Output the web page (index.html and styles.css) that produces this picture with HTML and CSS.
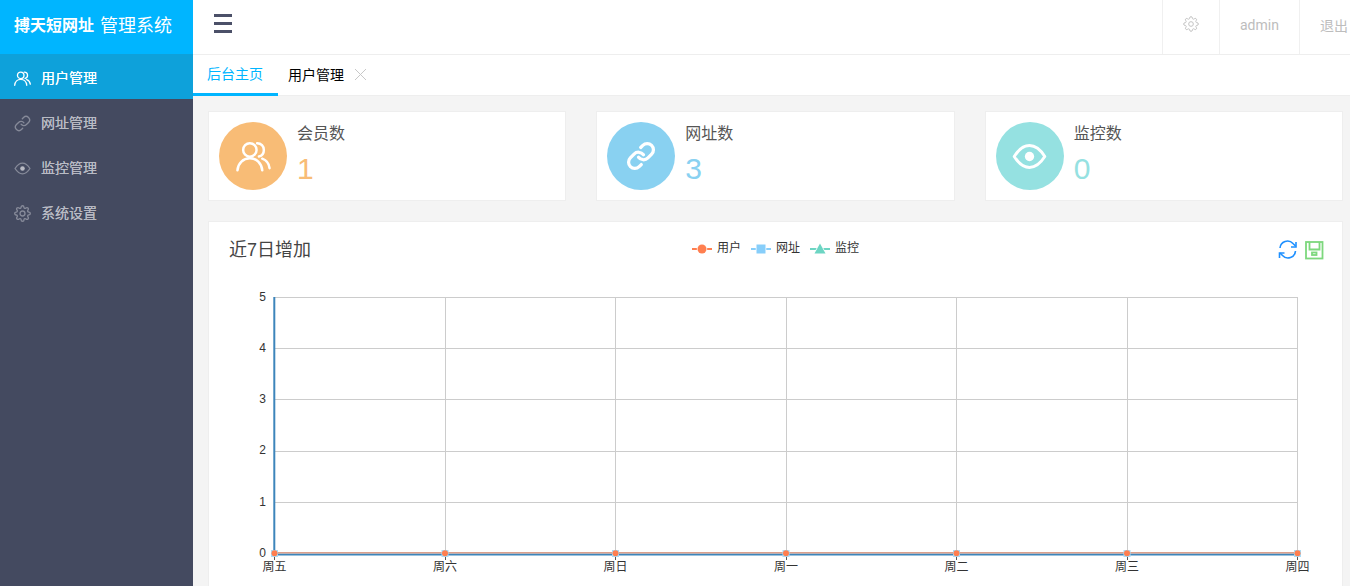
FILE: index.html
```html
<!DOCTYPE html>
<html lang="zh-CN">
<head>
  <meta charset="UTF-8">
  <meta name="viewport" content="width=device-width, initial-scale=1.0">
  <title>搏天短网址 管理系统</title>
  <link rel="stylesheet" href="styles.css">
</head>
<body>
  <svg class="icon-defs" width="0" height="0">
    <symbol id="i-users" viewBox="0 0 24 24">
      <circle cx="9.5" cy="7.5" r="4.6"/>
      <path d="M1 21.5c.4-5 4-8.300 8.500-8.300s8.100 3.300 8.500 8.300"/>
      <path d="M14.500 2.900c2.700 0 4.600 2.100 4.600 4.600 0 2.200-1.400 4-3.400 4.500"/>
      <path d="M18 13.500c2.800 1 4.700 3.700 5 6.500"/>
    </symbol>
    <symbol id="i-link" viewBox="0 0 24 24">
      <path d="M10 13a5 5 0 0 0 7.540.54l3-3a5 5 0 0 0-7.070-7.070l-1.720 1.710"/>
      <path d="M14 11a5 5 0 0 0-7.540-.54l-3 3a5 5 0 0 0 7.070 7.070l1.710-1.710"/>
    </symbol>
    <symbol id="i-eye" viewBox="0 0 24 24">
      <path d="M1.500 12C5 6.500 8.500 4.500 12 4.500s7 2 10.500 7.500C19 17.500 15.500 19.500 12 19.500S5 17.500 1.500 12z"/>
      <circle class="pupil" cx="12" cy="12" r="3.200"/>
    </symbol>
    <symbol id="i-gear" viewBox="0 0 24 24">
      <circle cx="12" cy="12" r="3.500"/>
      <path d="M19.400 15a1.650 1.650 0 0 0 .33 1.820l.06.06a2 2 0 0 1 0 2.830 2 2 0 0 1-2.830 0l-.06-.06a1.650 1.650 0 0 0-1.820-.33 1.650 1.650 0 0 0-1 1.510V21a2 2 0 0 1-2 2 2 2 0 0 1-2-2v-.09A1.650 1.650 0 0 0 9 19.400a1.650 1.650 0 0 0-1.820.33l-.06.06a2 2 0 0 1-2.830 0 2 2 0 0 1 0-2.830l.06-.06a1.650 1.650 0 0 0 .33-1.820 1.650 1.650 0 0 0-1.510-1H3a2 2 0 0 1-2-2 2 2 0 0 1 2-2h.09A1.650 1.650 0 0 0 4.600 9a1.650 1.650 0 0 0-.33-1.820l-.06-.06a2 2 0 0 1 0-2.830 2 2 0 0 1 2.830 0l.06.06a1.650 1.650 0 0 0 1.820.33H9a1.650 1.650 0 0 0 1-1.510V3a2 2 0 0 1 2-2 2 2 0 0 1 2 2v.09a1.650 1.650 0 0 0 1 1.510 1.650 1.650 0 0 0 1.820-.33l.06-.06a2 2 0 0 1 2.830 0 2 2 0 0 1 0 2.830l-.06.06a1.650 1.650 0 0 0-.33 1.820V9a1.650 1.650 0 0 0 1.510 1H21a2 2 0 0 1 2 2 2 2 0 0 1-2 2h-.09a1.650 1.650 0 0 0-1.510 1z"/>
    </symbol>
  </svg>

  <aside class="sidebar">
    <div class="logo"><b>搏天短网址</b><span>管理系统</span></div>
    <div class="menu-item active"><svg class="menu-icon"><use href="#i-users"/></svg>用户管理</div>
    <div class="menu-item"><svg class="menu-icon"><use href="#i-link"/></svg>网址管理</div>
    <div class="menu-item"><svg class="menu-icon"><use href="#i-eye"/></svg>监控管理</div>
    <div class="menu-item"><svg class="menu-icon"><use href="#i-gear"/></svg>系统设置</div>
  </aside>

  <div class="main">
    <header class="topbar">
      <div class="hamburger"><i></i><i></i><i></i></div>
      <div class="topbar-right">
        <div class="top-cell"><svg class="top-gear"><use href="#i-gear"/></svg></div>
        <div class="top-cell">admin</div>
        <div class="top-cell">退出</div>
      </div>
    </header>

    <nav class="tabs">
      <div class="tab current">后台主页</div>
      <div class="tab">用户管理<span class="tab-close"></span></div>
    </nav>

    <div class="content">
      <div class="stats">
        <div class="stat-card orange">
          <div class="stat-circle"><svg class="stat-icon"><use href="#i-users"/></svg></div>
          <div class="stat-text"><div class="stat-label">会员数</div><div class="stat-num">1</div></div>
        </div>
        <div class="stat-card blue">
          <div class="stat-circle"><svg class="stat-icon"><use href="#i-link"/></svg></div>
          <div class="stat-text"><div class="stat-label">网址数</div><div class="stat-num">3</div></div>
        </div>
        <div class="stat-card teal">
          <div class="stat-circle"><svg class="stat-icon"><use href="#i-eye"/></svg></div>
          <div class="stat-text"><div class="stat-label">监控数</div><div class="stat-num">0</div></div>
        </div>
      </div>

      <div class="chart-card">
        <svg class="chart" viewBox="209 222 1133 400" width="1133" height="400">
          <text class="chart-title" x="229" y="256">近7日增加</text>

          <path class="legend-orange" d="M692 249h20"/>
          <circle class="legend-mark" cx="702" cy="249" r="4.500" fill="#ff7f50"/>
          <text class="legend-text" x="717" y="252">用户</text>
          <path class="legend-sky" d="M751 249h20"/>
          <rect class="legend-mark" x="756.500" y="244.500" width="9" height="9" fill="#87cefa"/>
          <text class="legend-text" x="776" y="252">网址</text>
          <path class="legend-teal" d="M810 249h20"/>
          <path class="legend-mark" d="M820 243.500l5.500 10h-11z" fill="#6dd5c3"/>
          <text class="legend-text" x="835" y="252">监控</text>

          <g class="tool-refresh">
            <path d="M1280 248a7.500 7.500 0 0 1 13-4.500l2.500 2.500"/>
            <path d="M1296 242v5h-5"/>
            <path d="M1295.500 251a7.500 7.500 0 0 1-13 4.500l-2.500-2.500"/>
            <path d="M1279.500 258v-5h5"/>
          </g>
          <g class="tool-save">
            <rect x="1306" y="242" width="16.500" height="16.500"/>
            <path d="M1309.500 242v7.500h10v-7.500"/>
            <rect x="1312" y="252.500" width="4.500" height="2.500"/>
          </g>

          <path class="grid" d="M274 297.500h1024M274 348.500h1024M274 399.500h1024M274 451.500h1024M274 502.500h1024M445.500 297v256M615.500 297v256M786.500 297v256M956.500 297v256M1127.500 297v256M1297.500 297v256"/>
          <path class="ticks" d="M274.500 555v5M445.500 555v5M615.500 555v5M786.500 555v5M956.500 555v5M1127.500 555v5M1297.500 555v5"/>
          <path class="axis-y" d="M274.300 297v258"/>
          <path class="line-blue" d="M274 554.500h1024"/>
          <path class="line-orange" d="M274 552.750h1024"/>

          <g class="y-labels">
            <text x="266" y="301">5</text>
            <text x="266" y="352">4</text>
            <text x="266" y="403">3</text>
            <text x="266" y="454">2</text>
            <text x="266" y="506">1</text>
            <text x="266" y="557">0</text>
          </g>
          <g class="x-labels">
            <text x="274.500" y="571">周五</text>
            <text x="445" y="571">周六</text>
            <text x="615.500" y="571">周日</text>
            <text x="786" y="571">周一</text>
            <text x="956.500" y="571">周二</text>
            <text x="1127" y="571">周三</text>
            <text x="1297.500" y="571">周四</text>
          </g>
          <g class="points-under">
            <rect x="271" y="550" width="7" height="7"/>
            <rect x="441.500" y="550" width="7" height="7"/>
            <rect x="612" y="550" width="7" height="7"/>
            <rect x="782.500" y="550" width="7" height="7"/>
            <rect x="953" y="550" width="7" height="7"/>
            <rect x="1123.500" y="550" width="7" height="7"/>
            <rect x="1294" y="550" width="7" height="7"/>
          </g>
          <g class="points">
            <circle cx="274.500" cy="553.300" r="3"/>
            <circle cx="445" cy="553.300" r="3"/>
            <circle cx="615.500" cy="553.300" r="3"/>
            <circle cx="786" cy="553.300" r="3"/>
            <circle cx="956.500" cy="553.300" r="3"/>
            <circle cx="1127" cy="553.300" r="3"/>
            <circle cx="1297.500" cy="553.300" r="3"/>
          </g>
        </svg>
      </div>
    </div>
  </div>
</body>
</html>
```

FILE: styles.css
```css
* {
  box-sizing: border-box;
}

body {
  margin: 0;
  height: 100vh;
  display: flex;
  overflow: hidden;
  background: #f4f4f4;
  font-family: "Liberation Sans", "Noto Sans CJK SC", sans-serif;
  font-size: 14px;
  color: #333;
}

.icon-defs {
  display: none;
}

symbol {
  overflow: visible;
}

/* sidebar */
.sidebar {
  width: 193px;
  flex-shrink: 0;
  background: #444a60;
}

.logo {
  height: 54px;
  display: flex;
  align-items: center;
  padding: 0 0 7px 14px;
  background: #00b5ff;
  color: #fff;
  font-size: 16px;
}

.logo span {
  margin-left: 6px;
  font-size: 18px;
}

.menu-item {
  height: 45px;
  display: flex;
  align-items: center;
  padding-left: 14px;
  color: #b9bbc4;
  text-shadow: 0 0 .6px #b9bbc4;
}

.menu-item.active {
  background: #0ea1da;
  color: #fff;
  text-shadow: 0 0 .6px #fff;
}

.menu-icon {
  width: 17px;
  height: 17px;
  margin: 3px 10px 0 0;
  fill: none;
  stroke: #868a99;
  stroke-width: 1.900;
  stroke-linecap: round;
  stroke-linejoin: round;
}

.active .menu-icon {
  stroke: #fff;
}

.pupil {
  fill: currentColor;
  stroke: none;
}

.menu-item .pupil {
  color: #868a99;
}

/* header */
.main {
  flex: 1;
  min-width: 0;
}

.topbar {
  height: 55px;
  display: flex;
  justify-content: space-between;
  background: #fff;
  border-bottom: 1px solid #eee;
}

.hamburger {
  display: flex;
  flex-direction: column;
  gap: 5px;
  width: 18px;
  margin: 14px 0 0 21px;
}

.hamburger i {
  height: 3px;
  background: #4b5068;
}

.topbar-right {
  display: flex;
  width: 188px;
  overflow: hidden;
  color: #bdbdbd;
}

.top-cell {
  display: flex;
  align-items: center;
  flex-shrink: 0;
  padding: 0 20px 4px;
  border-left: 1px solid #f0f0f0;
  font-family: Roboto, "Noto Sans CJK SC", sans-serif;
  white-space: nowrap;
}

.top-gear {
  width: 16px;
  height: 16px;
  margin-top: -2px;
  fill: none;
  stroke: #c4c4c4;
  stroke-width: 1.500;
}

/* tabs */
.tabs {
  height: 41px;
  display: flex;
  background: #fff;
  border-bottom: 1px solid #eee;
}

.tab {
  display: flex;
  align-items: center;
  height: 41px;
  padding: 0 10px 3px 10px;
  color: #000;
}

.tab.current {
  width: 85px;
  padding-left: 14px;
  color: #00b5ff;
  border-bottom: 3px solid #00b5ff;
  margin-right: 0;
}

.tab-close {
  width: 11px;
  height: 11px;
  margin-left: 11px;
  background:
    linear-gradient(45deg, transparent 47%, #c8c8c8 47%, #c8c8c8 53%, transparent 53%),
    linear-gradient(-45deg, transparent 47%, #c8c8c8 47%, #c8c8c8 53%, transparent 53%);
}

/* content */
.content {
  padding: 15px 7px 0 15px;
}

.stats {
  display: grid;
  grid-template-columns: repeat(3, 1fr);
  gap: 30px;
}

.stat-card {
  height: 90px;
  display: flex;
  padding: 10px;
  background: #fff;
  border: 1px solid #eee;
}

.stat-circle {
  width: 68px;
  height: 68px;
  display: flex;
  align-items: center;
  justify-content: center;
  border-radius: 50%;
  color: #fff;
}

.stat-icon {
  width: 35px;
  height: 35px;
  fill: none;
  stroke: #fff;
  stroke-width: 1.700;
  stroke-linecap: round;
  stroke-linejoin: round;
}

.blue .stat-icon {
  width: 30px;
  height: 30px;
  stroke-width: 2.600;
}

.teal .stat-icon {
  stroke-width: 2;
}

.orange .stat-circle { background: #f8bc76; }
.blue .stat-circle { background: #89d1f1; }
.teal .stat-circle { background: #95e1e1; }
.orange .stat-num { color: #f8bc76; }
.blue .stat-num { color: #89d1f1; }
.teal .stat-num { color: #95e1e1; }

.stat-text {
  margin-left: 10px;
}

.stat-label {
  height: 24px;
  font-size: 16px;
  line-height: 24px;
  color: #555;
}

.stat-num {
  margin-top: 3px;
  font-size: 30px;
  line-height: 40px;
}

/* chart */
.chart-card {
  height: 420px;
  margin-top: 20px;
  background: #fff;
  border: 1px solid #eee;
}

.chart {
  display: block;
  font-family: "Liberation Sans", "Noto Sans CJK SC", sans-serif;
}

.chart-title {
  font-size: 18px;
  fill: #444;
}

.legend-text {
  font-size: 12px;
  fill: #333;
}

.legend-orange,
.legend-sky,
.legend-teal {
  fill: none;
  stroke-width: 2;
}

.legend-orange { stroke: #ff7f50; }
.legend-sky { stroke: #87cefa; }
.legend-teal { stroke: #6dd5c3; }

.legend-mark {
  stroke: #fff;
  stroke-width: 1.500;
  paint-order: stroke;
}

.tool-refresh {
  fill: none;
  stroke: #1e90ff;
  stroke-width: 1.600;
}

.tool-save {
  fill: none;
  stroke: #7dd87d;
  stroke-width: 1.800;
}

.grid {
  fill: none;
  stroke: #ccc;
}

.ticks {
  fill: none;
  stroke: #555;
}

.axis-y {
  fill: none;
  stroke: #3d85bb;
  stroke-width: 2;
}

.line-blue {
  fill: none;
  stroke: #3d85bb;
  stroke-width: 2;
}

.line-orange {
  fill: none;
  stroke: #dca08c;
  stroke-width: 1.500;
}

.y-labels text {
  font-size: 12px;
  fill: #333;
  text-anchor: end;
}

.x-labels text {
  font-size: 12px;
  fill: #333;
  text-anchor: middle;
}

.points-under rect {
  fill: #a8dcf7;
}

.points circle {
  fill: #ff7f50;
}
```
